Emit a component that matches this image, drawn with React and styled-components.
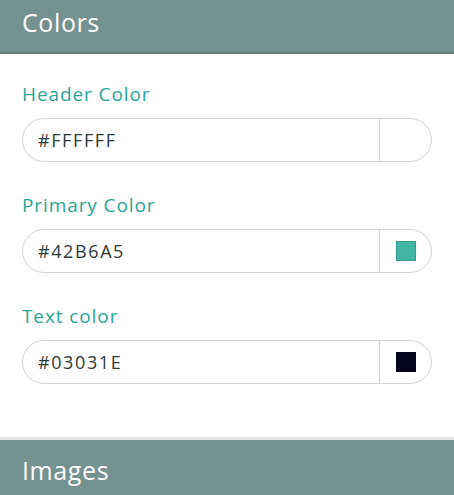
import React from 'react';
import styled, { createGlobalStyle } from 'styled-components';

const GlobalStyle = createGlobalStyle`
  body {
    margin: 0;
    background: #ffffff;
    font-family: "Open Sans", "Liberation Sans", sans-serif;
  }
`;

const Page = styled.div`
  width: 454px;
  height: 495px;
  overflow: hidden;
  display: flex;
  flex-direction: column;
`;

const SectionHeader = styled.div`
  flex-shrink: 0;
  box-sizing: border-box;
  background: #74928f;
  color: #ffffff;
  font-size: 25px;
  letter-spacing: 0.6px;
  padding: 0 22px;
  display: flex;
  align-items: center;
  height: ${({ $top }) => ($top ? '54px' : '58px')};
  padding-bottom: ${({ $top }) => ($top ? '8px' : '0')};
  padding-top: ${({ $top }) => ($top ? '0' : '4px')};
  border-bottom: ${({ $top }) => ($top ? '2px solid #5f7b78' : 'none')};
  border-top: ${({ $top }) => ($top ? 'none' : '3px solid #e3e5e6')};
`;

const Body = styled.div`
  flex: 1;
  padding: 28px 22px 0;
  display: flex;
  flex-direction: column;
  gap: 31px;
`;

const Field = styled.div`
  display: flex;
  flex-direction: column;
  gap: 12px;
`;

const Label = styled.label`
  color: #2aa597;
  font-size: 19px;
  letter-spacing: 0.9px;
  line-height: 24px;
`;

const InputGroup = styled.div`
  display: flex;
  height: 44px;
  border: 1px solid #cfd3da;
  border-radius: 22px;
  box-sizing: border-box;
  overflow: hidden;
`;

const TextInput = styled.input`
  flex: 1;
  min-width: 0;
  border: none;
  outline: none;
  padding: 0 0 0 15px;
  font-family: inherit;
  font-size: 18px;
  letter-spacing: 1.6px;
  color: #2c3a38;
  background: transparent;
`;

const SwatchCell = styled.div`
  flex: 0 0 52px;
  box-sizing: border-box;
  border-left: 1px solid #cfd3da;
  display: flex;
  align-items: center;
  justify-content: center;
`;

const Swatch = styled.span`
  width: 20px;
  height: 20px;
  box-sizing: border-box;
  background: ${({ $color }) => $color};
  border: 1px solid ${({ $color }) => ($color === '#FFFFFF' ? 'transparent' : 'rgba(0,0,0,0.15)')};
`;

const colors = [
  { label: 'Header Color', value: '#FFFFFF' },
  { label: 'Primary Color', value: '#42B6A5' },
  { label: 'Text color', value: '#03031E' },
];

export default function App() {
  return (
    <Page>
      <GlobalStyle />
      <SectionHeader $top>Colors</SectionHeader>
      <Body>
        {colors.map((c) => (
          <Field key={c.label}>
            <Label>{c.label}</Label>
            <InputGroup>
              <TextInput defaultValue={c.value} />
              <SwatchCell>
                <Swatch $color={c.value} />
              </SwatchCell>
            </InputGroup>
          </Field>
        ))}
      </Body>
      <SectionHeader>Images</SectionHeader>
    </Page>
  );
}
